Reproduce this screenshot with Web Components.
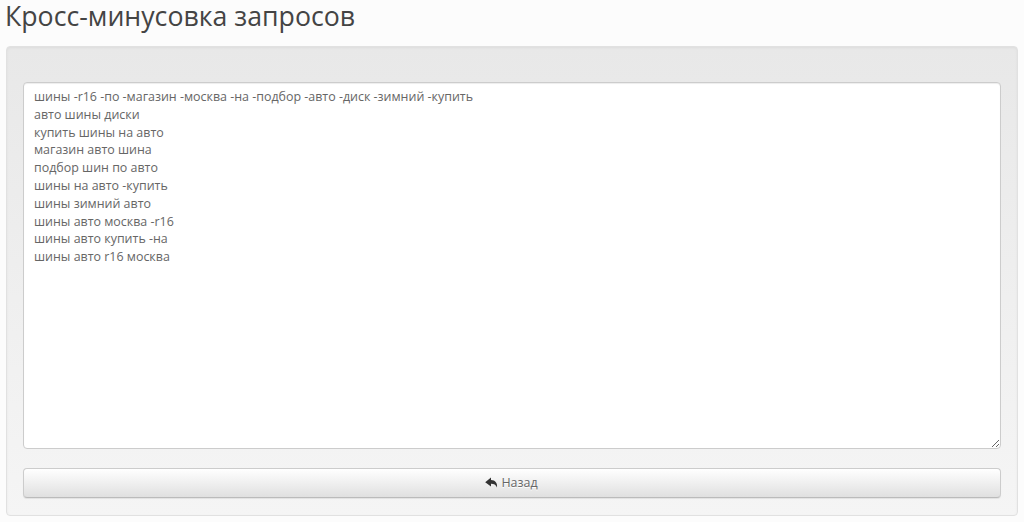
<!DOCTYPE html>
<html lang="ru">
<head>
<meta charset="utf-8">
<title>Кросс-минусовка запросов</title>
<style>
  html, body { margin: 0; height: 100%; }
  body { background: #fcfcfc; color: #555; font-family: "Open Sans", "Noto Sans", sans-serif; overflow: hidden; }
</style>
</head>
<body>
<cross-page>
  <span slot="title">Кросс-минусовка запросов</span>
  <query-box>шины -r16 -по -магазин -москва -на -подбор -авто -диск -зимний -купить
авто шины диски
купить шины на авто
магазин авто шина
подбор шин по авто
шины на авто -купить
шины зимний авто
шины авто москва -r16
шины авто купить -на
шины авто r16 москва</query-box>
  <back-button>Назад</back-button>
</cross-page>
<script>
// page frame: title and the grey well under it
class CrossPage extends HTMLElement {
  constructor() {
    super();
    this.attachShadow({ mode: "open" }).innerHTML = `
      <style>
        :host { display: flex; flex-direction: column; height: 522px; box-sizing: border-box; padding: 0 6px 6px; }
        h1 { margin: 0 0 0 -1px; height: 46px; font-size: 26.7px; line-height: 31px; font-weight: 400; color: #444; flex: none; }
        ::slotted(span) { display: block; }
        .well {
          flex: 1; min-height: 0; box-sizing: border-box; display: flex; flex-direction: column; gap: 19px;
          padding: 35px 16px 17px;
          border: 1px solid #e1e1e1; border-radius: 4px;
          background: linear-gradient(to bottom, #e8e8e8 0, #f5f5f5 100%);
          box-shadow: inset 0 1px 3px rgba(0,0,0,.05), 0 1px 0 rgba(255,255,255,.1);
        }
      </style>
      <h1><slot name="title"></slot></h1>
      <div class="well"><slot></slot></div>`;
  }
}

class QueryBox extends HTMLElement {
  constructor() {
    super();
    this.attachShadow({ mode: "open" }).innerHTML = `
      <style>
        :host { display: block; flex: 1; min-height: 0; }
        textarea {
          display: block; width: 100%; height: 100%; box-sizing: border-box; margin: 0;
          padding: 5px 10px; border: 1px solid #ccc; border-radius: 4px;
          background: #fff; color: #666; outline: none;
          font: 12.45px/17.8px "Open Sans", "Noto Sans", sans-serif;
          box-shadow: inset 0 1px 1px rgba(0,0,0,.075);
        }
      </style>
      <textarea spellcheck="false"></textarea>`;
  }
  connectedCallback() {
    this.shadowRoot.querySelector("textarea").value = this.textContent;
  }
}

class BackButton extends HTMLElement {
  constructor() {
    super();
    this.attachShadow({ mode: "open" }).innerHTML = `
      <style>
        :host { display: block; flex: none; }
        button {
          display: flex; align-items: center; justify-content: center; gap: 3px;
          width: 100%; height: 30px; box-sizing: border-box; margin: 0; padding: 0;
          border: 1px solid #ccc; border-bottom-color: #bbb; border-radius: 4px;
          background: linear-gradient(to bottom, #fff 0, #e0e0e0 100%);
          color: #666; text-shadow: 0 1px 0 #fff;
          font: 12.45px/18px "Open Sans", "Noto Sans", sans-serif;
          box-shadow: inset 0 1px 0 rgba(255,255,255,.15), 0 1px 1px rgba(0,0,0,.075);
        }
        svg { width: 13px; height: 12px; fill: #333; flex: none; margin-left: -1px; }
      </style>
      <button type="button">
        <svg viewBox="0 0 13 12"><path d="M6 .6 .2 5.200 6 9.600V6.800C9 6.800 10.800 7.600 12 10.600 12.600 6.200 10.300 3.200 6 3.100Z"/></svg>
        <slot></slot>
      </button>`;
  }
}

customElements.define("cross-page", CrossPage);
customElements.define("query-box", QueryBox);
customElements.define("back-button", BackButton);
</script>
</body>
</html>
